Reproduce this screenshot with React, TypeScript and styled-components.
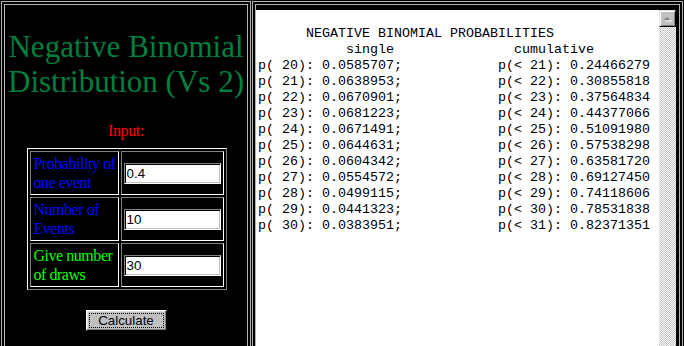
import React from "react";
import styled, { createGlobalStyle } from "styled-components";

const single: Array<[number, string]> = [
  [20, "0.0585707"], [21, "0.0638953"], [22, "0.0670901"], [23, "0.0681223"],
  [24, "0.0671491"], [25, "0.0644631"], [26, "0.0604342"], [27, "0.0554572"],
  [28, "0.0499115"], [29, "0.0441323"], [30, "0.0383951"],
];

const cumulative: Array<[number, string]> = [
  [21, "0.24466279"], [22, "0.30855818"], [23, "0.37564834"], [24, "0.44377066"],
  [25, "0.51091980"], [26, "0.57538298"], [27, "0.63581720"], [28, "0.69127450"],
  [29, "0.74118606"], [30, "0.78531838"], [31, "0.82371351"],
];

const outputText = [
  "",
  "      NEGATIVE BINOMIAL PROBABILITIES",
  "           single               cumulative",
  ...single.map((s, i) => `p( ${s[0]}): ${s[1]};            p(< ${cumulative[i][0]}): ${cumulative[i][1]}`),
].join("\n");

const fields = [
  { label: ["Probability of", "one event"], value: "0.4", color: "#0000ff" },
  { label: ["Number of", "Events"], value: "10", color: "#0000ff" },
  { label: ["Give number", "of draws"], value: "30", color: "#00ff00" },
];

const App: React.FC = () => {
  return (
    <>
      <GlobalStyle />
      <StyledPage>
        <StyledFrame $width={250}>
          <StyledFrameInner>
            <StyledInputPanel>
              <StyledTitle>Negative Binomial Distribution (Vs 2)</StyledTitle>
              <StyledInputHeading>Input:</StyledInputHeading>
              <StyledTable>
                <tbody>
                  {fields.map(f => (
                    <tr key={f.value}>
                      <StyledLabelCell $color={f.color}>
                        {f.label[0]}<br />{f.label[1]}
                      </StyledLabelCell>
                      <StyledInputCell>
                        <StyledInput defaultValue={f.value} />
                      </StyledInputCell>
                    </tr>
                  ))}
                </tbody>
              </StyledTable>
              <StyledButton type="button">
                <StyledFocusRing>Calculate</StyledFocusRing>
              </StyledButton>
            </StyledInputPanel>
          </StyledFrameInner>
        </StyledFrame>
        <StyledFrame $width={431}>
          <StyledFrameInner>
            <StyledTextBox>
              <StyledOutput>{outputText}</StyledOutput>
              <StyledScrollbar>
                <StyledScrollButton>
                  <svg width="9" height="6" viewBox="0 0 9 6">
                    <path d="M4 1 L7 4 L1 4 Z" fill="#808080" />
                    <path d="M8 4 L8 5 L2 5" stroke="#ffffff" strokeWidth="1" fill="none" />
                  </svg>
                </StyledScrollButton>
                <StyledScrollTrack />
              </StyledScrollbar>
            </StyledTextBox>
          </StyledFrameInner>
        </StyledFrame>
      </StyledPage>
    </>
  );
};

const GlobalStyle = createGlobalStyle`
  html, body { margin: 0; padding: 0; background: #000; }
  body { width: 684px; height: 346px; overflow: hidden; }
`;

const StyledPage = styled.div`
  display: flex; align-items: flex-start; gap: 1px; box-sizing: border-box;
  width: 684px; height: 346px; padding: 1px 1px 0 1px; background: #000; overflow: hidden;
`;

const StyledFrame = styled.div<{ $width: number }>`
  width: ${p => p.$width}px; height: 370px; flex-shrink: 0; box-sizing: border-box;
  border: 1px solid #b4b4b4; padding: 2px; background: #000;
`;

const StyledFrameInner = styled.div`
  height: 100%; box-sizing: border-box; border: 1px solid #b4b4b4; background: #000;
  display: flex; flex-direction: column;
`;

const StyledInputPanel = styled.div`
  display: flex; flex-direction: column; align-items: center;
`;

const StyledTitle = styled.h1`
  margin: 24px 0 0; font-family: "Liberation Serif", "Times New Roman", serif; font-weight: normal;
  font-size: 31px; line-height: 35px; color: #008040; text-align: center;
`;

const StyledInputHeading = styled.div`
  margin-top: 22px; font-family: "Liberation Serif", "Times New Roman", serif;
  font-size: 16px; letter-spacing: -0.4px; line-height: 19px; color: #ff0000;
`;

const StyledTable = styled.table`
  margin: 8px 0 0 2px; border-collapse: separate; border-spacing: 2px;
  border: 1px solid; border-color: #ffffff #808080 #808080 #ffffff;
`;

const StyledLabelCell = styled.td<{ $color: string }>`
  width: 81px; height: 38px; padding: 2px; vertical-align: middle;
  border: 1px solid; border-color: #808080 #ffffff #ffffff #808080;
  font-family: "Liberation Serif", "Times New Roman", serif; font-size: 16px; letter-spacing: -0.45px;
  line-height: 19px; color: ${p => p.$color}; white-space: nowrap;
`;

const StyledInputCell = styled.td`
  width: 97px; height: 38px; padding: 2px; vertical-align: middle;
  border: 1px solid; border-color: #808080 #ffffff #ffffff #808080;
`;

const StyledInput = styled.input`
  display: block; box-sizing: border-box; width: 97px; height: 21px; margin: 0; padding: 1px 2px 0;
  background: #fff; border: 1px solid; border-color: #808080 #ffffff #ffffff #808080;
  box-shadow: inset 1px 1px #000, inset -1px -1px #c0c0c0; outline: none;
  font-family: "Liberation Sans", Arial, sans-serif; font-size: 13.33px; color: #000;
`;

const StyledButton = styled.button`
  margin-top: 20px; width: 81px; height: 21px; padding: 2px; box-sizing: border-box;
  background: #c0c0c0; border: 1px solid; border-color: #ffffff #000 #000 #ffffff;
  box-shadow: inset -1px -1px #808080, inset 1px 1px #dfdfdf;
  font-family: "Liberation Sans", Arial, sans-serif; font-size: 13.33px; color: #000;
`;

const StyledFocusRing = styled.span`
  display: flex; align-items: center; justify-content: center; height: 100%; box-sizing: border-box;
  border: 1px dotted #000;
`;

const StyledTextBox = styled.div`
  display: flex; flex: 1; margin: 5px 3px 0 0; background: #fff;
`;

const StyledOutput = styled.pre`
  flex: 1; margin: 0; padding: 0 0 0 2px;
  font-family: "Liberation Mono", "Courier New", monospace; font-size: 13.333px; line-height: 16px; color: #000;
`;

const StyledScrollbar = styled.div`
  width: 17px; display: flex; flex-direction: column;
`;

const StyledScrollButton = styled.div`
  height: 17px; box-sizing: border-box; display: flex; align-items: center; justify-content: center;
  background: #c0c0c0; border: 1px solid; border-color: #dfdfdf #000 #000 #dfdfdf;
  box-shadow: inset 1px 1px #fff, inset -1px -1px #808080;
`;

const StyledScrollTrack = styled.div`
  flex: 1;
  background-image: conic-gradient(#c0c0c0 25%, #fff 0 50%, #c0c0c0 0 75%, #fff 0);
  background-size: 2px 2px;
`;

export default App;
